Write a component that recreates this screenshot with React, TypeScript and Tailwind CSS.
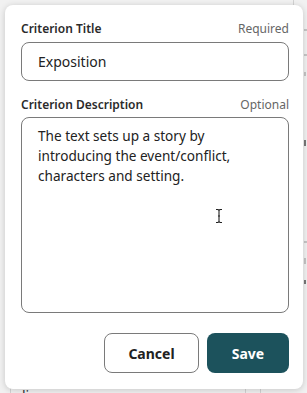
import React from "react";

function Label({ title, hint }: { title: string; hint: string }) {
  return (
    <div className="flex items-center justify-between h-[17px]">
      <span className="text-[12px] font-semibold text-[#2b2b2b]">{title}</span>
      <span className="text-[12px] text-[#666]">{hint}</span>
    </div>
  );
}

export default function App() {
  return (
    <div
      className="relative w-[307px] h-[393px] overflow-hidden bg-[#f1f1f1]"
      style={{ fontFamily: '"Noto Sans", "Open Sans", sans-serif' }}
    >
      {/* background page behind the popup (decorative) */}
      <svg className="absolute left-0 top-0" width="307" height="393" viewBox="0 0 307 393">
        <path d="M10.5 378 V393 M245.5 378 V393 M260.5 378 V393 M293.5 0 V10" stroke="#d2d2d2" strokeWidth="1" />
        <path d="M304 30 H307 M304 55 H307 M304 242 H307" stroke="#999" strokeWidth="1" />
        <path d="M305 72 V76 M305 258 V264" stroke="#c4c4c4" strokeWidth="2" />
        <path d="M305 140 V146 M305 280 V284" stroke="#777" strokeWidth="2" />
      </svg>
      <div className="absolute left-[22px] top-[386px] text-[14px] leading-[20px] text-[#333]">lines.</div>

      {/* popup card */}
      <div className="relative ml-[5px] mt-[5px] w-[298px] rounded-[8px] bg-white shadow-[0_1px_6px_rgba(0,0,0,0.18)] pl-[16px] pr-[14px] pt-[15px] pb-[16px] flex flex-col">
        <Label title="Criterion Title" hint="Required" />
        <div className="mt-[5px] h-[39px] rounded-[8px] border border-[#7a7a7a] flex items-center pl-[16px] text-[14px] text-[#222]">
          Exposition
        </div>
        <div className="mt-[15px]">
          <Label title="Criterion Description" hint="Optional" />
        </div>
        <div className="relative mt-[4px] h-[196px] rounded-[8px] border border-[#7a7a7a] pl-[16px] pr-[12px] pt-[8px] text-[13.6px] leading-[20px] text-[#222]">
          The text sets up a story by introducing the event/conflict, characters and setting.
          <svg
            className="absolute left-[193px] top-[90px]"
            width="8"
            height="16"
            viewBox="0 0 8 16"
          >
            <path
              d="M1 1.5 L3 1.5 L4 2.5 L5 1.5 L7 1.5 M4 2.5 L4 13.5 M1 14.5 L3 14.5 L4 13.5 L5 14.5 L7 14.5 M3 8 L5 8"
              stroke="#222"
              strokeWidth="1.1"
              fill="none"
            />
          </svg>
        </div>
        <div className="mt-[20px] flex justify-end gap-[8px]">
          <button className="w-[95px] h-[40px] rounded-[8px] border border-[#7a7a7a] bg-white text-[14px] font-bold text-[#222]">
            Cancel
          </button>
          <button className="w-[82px] h-[40px] rounded-[8px] bg-[#1c525c] text-[14px] font-bold text-white">
            Save
          </button>
        </div>
      </div>
    </div>
  );
}
